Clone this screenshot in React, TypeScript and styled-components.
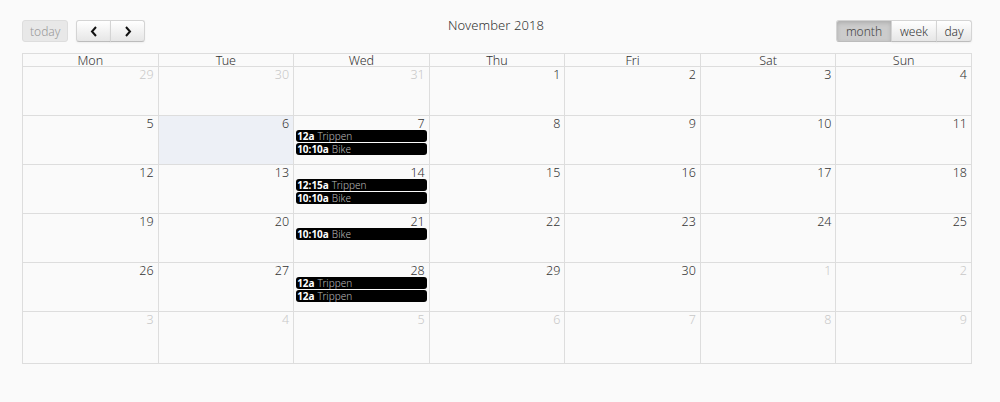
import React from "react";
import styled, { createGlobalStyle, css } from "styled-components";

const Global = createGlobalStyle`
  html, body { margin: 0; padding: 0; background: #fafafa; }
  body { font-family: "Noto Sans", "DejaVu Sans", sans-serif; font-weight: 300; color: #333; }
`;

const Page = styled.div`
  padding: 20px 28px 0 22px;
  width: 950px;
`;

const Toolbar = styled.div`
  display: grid;
  grid-template-columns: 1fr auto 1fr;
  align-items: center;
  height: 22px;
  margin-bottom: 11px;
`;

const Left = styled.div`
  display: flex;
  gap: 8px;
`;

const Right = styled.div`
  display: flex;
  justify-content: flex-end;
`;

const Title = styled.h2`
  margin: 0;
  font-size: 13px;
  font-weight: 300;
  color: #333;
  position: relative;
  top: -6px;
  left: -1px;
  letter-spacing: 0.1px;
`;

const Group = styled.div`
  display: flex;
`;

const Btn = styled.button<{ $active?: boolean; $disabled?: boolean; $pos?: "first" | "mid" | "last" | "only"; $w?: number }>`
  height: 22px;
  padding: 0 7px;
  min-width: ${(p) => (p.$w ? `${p.$w}px` : "0")};
  font-family: inherit;
  font-weight: 300;
  font-size: 12px;
  color: #333;
  border: 1px solid #d4d4d4;
  border-bottom-color: #bcbcbc;
  background: linear-gradient(#ffffff, #e6e6e6);
  box-shadow: inset 0 1px 0 rgba(255,255,255,0.2), 0 1px 2px rgba(0,0,0,0.05);
  display: flex;
  align-items: center;
  justify-content: center;
  border-radius: ${(p) =>
    p.$pos === "first" ? "3px 0 0 3px" : p.$pos === "last" ? "0 3px 3px 0" : p.$pos === "mid" ? "0" : "3px"};
  margin-left: ${(p) => (p.$pos === "mid" || p.$pos === "last" ? "-1px" : "0")};
  ${(p) =>
    p.$active &&
    css`
      background: #cccccc;
      box-shadow: inset 0 2px 4px rgba(0,0,0,0.15);
      color: #444;
    `}
  ${(p) =>
    p.$disabled &&
    css`
      background: #e8e8e8;
      color: #999;
      box-shadow: none;
      border-color: #ddd;
    `}
`;

const ArrowBtn = styled(Btn)`
  width: 35px;
  padding: 0;
`;

const Table = styled.div`
  border-left: 1px solid #ddd;
  border-top: 1px solid #ddd;
  display: grid;
  grid-template-columns: repeat(7, 1fr);
`;

const HeadCell = styled.div`
  border-right: 1px solid #ddd;
  border-bottom: 1px solid #ddd;
  height: 12px;
  font-size: 12.5px;
  line-height: 13px;
  text-align: center;
  color: #333;
`;

const DayCell = styled.div<{ $today?: boolean; $h: number }>`
  border-right: 1px solid #ddd;
  border-bottom: 1px solid #ddd;
  height: ${(p) => p.$h}px;
  background: ${(p) => (p.$today ? "#edf0f6" : "transparent")};
  box-sizing: border-box;
  padding: 1px 2px 0 1px;
  display: flex;
  flex-direction: column;
`;

const DayNum = styled.div<{ $other?: boolean }>`
  text-align: right;
  font-size: 12.5px;
  line-height: 13px;
  padding-right: 2px;
  color: ${(p) => (p.$other ? "#c8c8c8" : "#333")};
`;

const Event = styled.div`
  background: #000;
  border-radius: 3px;
  height: 12px;
  margin: 0 0 1px 1px;
  font-size: 10px;
  line-height: 12px;
  padding-left: 1px;
  white-space: nowrap;
  overflow: hidden;
`;

const Time = styled.span`
  color: #fff;
  font-weight: 700;
`;

const EvTitle = styled.span`
  color: #bbb;
  font-weight: 300;
  margin-left: 3px;
`;

type Ev = { t: string; n: string };
type Day = { d: number; other?: boolean; today?: boolean; ev?: Ev[] };

const T = { t: "12a", n: "Trippen" };
const B = { t: "10:10a", n: "Bike" };

const weeks: Day[][] = [
  [{ d: 29, other: true }, { d: 30, other: true }, { d: 31, other: true }, { d: 1 }, { d: 2 }, { d: 3 }, { d: 4 }],
  [{ d: 5 }, { d: 6, today: true }, { d: 7, ev: [T, B] }, { d: 8 }, { d: 9 }, { d: 10 }, { d: 11 }],
  [{ d: 12 }, { d: 13 }, { d: 14, ev: [{ t: "12:15a", n: "Trippen" }, B] }, { d: 15 }, { d: 16 }, { d: 17 }, { d: 18 }],
  [{ d: 19 }, { d: 20 }, { d: 21, ev: [B] }, { d: 22 }, { d: 23 }, { d: 24 }, { d: 25 }],
  [{ d: 26 }, { d: 27 }, { d: 28, ev: [T, T] }, { d: 29 }, { d: 30 }, { d: 1, other: true }, { d: 2, other: true }],
  [3, 4, 5, 6, 7, 8, 9].map((d) => ({ d, other: true })),
];

const heights = [49, 49, 49, 49, 49, 52];
const names = ["Mon", "Tue", "Wed", "Thu", "Fri", "Sat", "Sun"];

const Chevron = ({ dir }: { dir: "l" | "r" }) => (
  <svg width="8" height="11" viewBox="0 0 8 11">
    <path
      d={dir === "l" ? "M6 1 L2 5.5 L6 10" : "M2 1 L6 5.5 L2 10"}
      fill="none"
      stroke="#111"
      strokeWidth="2"
    />
  </svg>
);

export default function App() {
  return (
    <>
      <Global />
      <Page>
        <Toolbar>
          <Left>
            <Btn $disabled $pos="only">today</Btn>
            <Group>
              <ArrowBtn $pos="first"><Chevron dir="l" /></ArrowBtn>
              <ArrowBtn $pos="last"><Chevron dir="r" /></ArrowBtn>
            </Group>
          </Left>
          <Title>November 2018</Title>
          <Right>
            <Group>
              <Btn $active $pos="first" $w={56}>month</Btn>
              <Btn $pos="mid" $w={46}>week</Btn>
              <Btn $pos="last" $w={36}>day</Btn>
            </Group>
          </Right>
        </Toolbar>
        <Table>
          {names.map((n) => (
            <HeadCell key={n}>{n}</HeadCell>
          ))}
          {weeks.map((w, wi) =>
            w.map((day, di) => (
              <DayCell key={`${wi}-${di}`} $today={day.today} $h={heights[wi]}>
                <DayNum $other={day.other}>{day.d}</DayNum>
                {day.ev?.map((e, i) => (
                  <Event key={i}>
                    <Time>{e.t}</Time>
                    <EvTitle>{e.n}</EvTitle>
                  </Event>
                ))}
              </DayCell>
            ))
          )}
        </Table>
      </Page>
    </>
  );
}
